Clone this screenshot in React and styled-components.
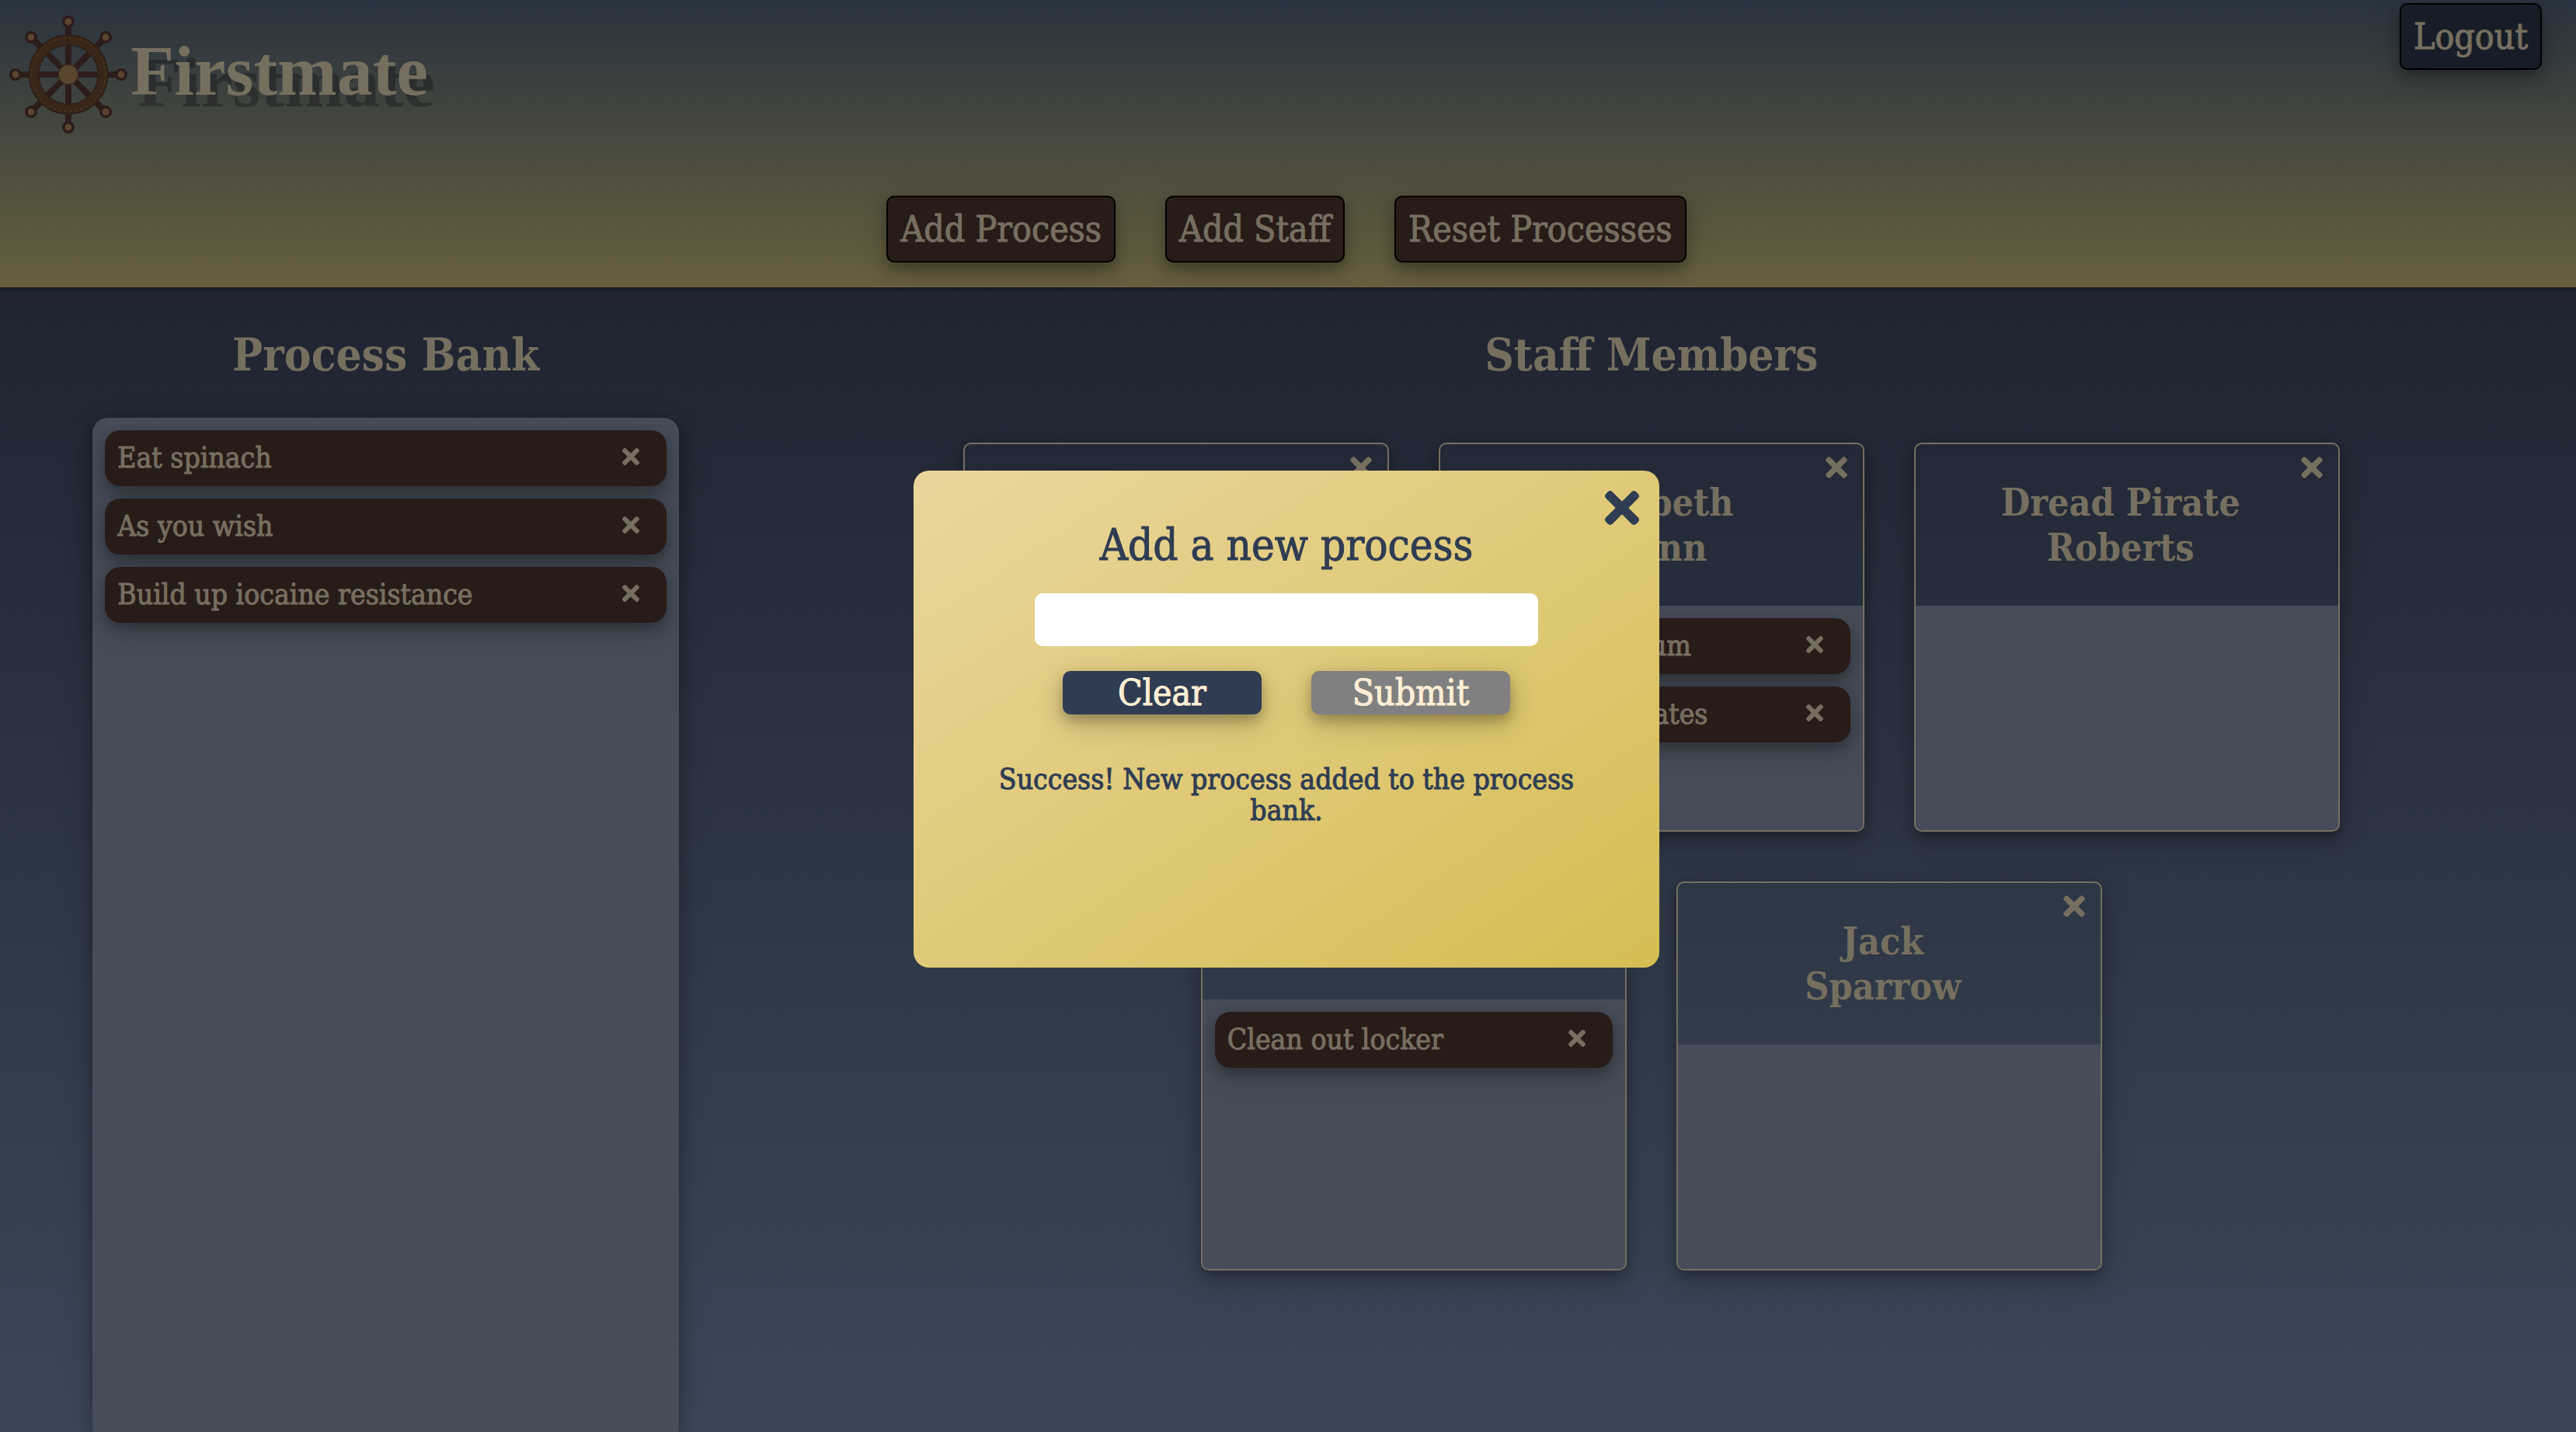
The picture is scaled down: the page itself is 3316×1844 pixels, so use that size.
import React, { useState } from "react";
import styled, { createGlobalStyle, ThemeProvider } from "styled-components";
import { FaTimes } from "react-icons/fa";

const theme = {
  serif: `"DejaVu Serif Condensed", "DejaVu Serif", serif`,
  title: `"Liberation Serif", serif`,
  parchment: "#766f60",
  cream: "#ffefd5",
  wood: "#281c19",
  slate: "#464d58",
  navy: "#2f3c52",
  night: "#171d27",
  lift: "0 8px 16px rgba(0, 0, 0, 0.24), 0 12px 40px rgba(0, 0, 0, 0.19)",
};

const GlobalStyle = createGlobalStyle`
  *, *::before, *::after { box-sizing: border-box; }
  body { margin: 0; background: #3c4857; }
  h1, h2, h3, p, ul { margin: 0; padding: 0; }
  button, input { font: inherit; color: inherit; }
  button { cursor: pointer; }
`;

const Page = styled.div`
  display: flex;
  flex-direction: column;
  height: 100vh;
  overflow: hidden;
  color: ${({ theme }) => theme.parchment};
  font-family: ${({ theme }) => theme.serif};
`;

const Header = styled.header`
  flex: none;
  background: linear-gradient(#29333f, #68603e);
  border-bottom: 4px solid ${({ theme }) => theme.night};
`;

const TopRow = styled.div`
  display: flex;
  justify-content: space-between;
  align-items: flex-start;
  padding: 4px 44px 0 8px;
`;

const Brand = styled.div`
  display: flex;
  align-items: center;
  padding-top: 12px;
`;

const Title = styled.h1`
  padding-bottom: 10px;
  font: 700 92px / 104px ${({ theme }) => theme.title};
  text-shadow: 9px 15px 0 rgba(0, 0, 0, 0.28);
`;

const HeaderButton = styled.button`
  padding: 16px;
  border: 2px solid #000;
  border-radius: 10px;
  background: ${({ $tone, theme }) => theme[$tone]};
  box-shadow: ${({ theme }) => theme.lift};
  font-size: 46px;
  line-height: 50px;
  -webkit-text-stroke: 1px;
`;

const Toolbar = styled.nav`
  display: flex;
  justify-content: center;
  gap: 64px;
  padding: 76px 4px 32px 0;
`;

const Main = styled.main`
  flex: 1;
  display: flex;
  min-height: 0;
  padding-right: 4px;
  background: linear-gradient(#1f2430, #3b4757);
`;

const Column = styled.section`
  display: flex;
  flex-direction: column;
  align-items: center;
  width: ${({ $width }) => $width};
  padding: 51px ${({ $inset }) => $inset || "0px"} 0 0;
`;

const Heading = styled.h2`
  font-size: 58px;
  line-height: 64px;
`;

const Bank = styled.div`
  flex: 1;
  width: 76%;
  margin-top: 49px;
  padding: 16px;
  border-radius: 20px 20px 0 0;
  background: ${({ theme }) => theme.slate};
  box-shadow: ${({ theme }) => theme.lift};
`;

const List = styled.ul`
  display: grid;
  gap: 16px;
  list-style: none;
`;

const Item = styled.li`
  display: flex;
  justify-content: space-between;
  align-items: center;
  height: 72px;
  padding: 0 30px 0 16px;
  border-radius: 20px;
  background: ${({ theme }) => theme.wood};
  box-shadow: ${({ theme }) => theme.lift};
  font-size: 37px;
  line-height: 40px;
  -webkit-text-stroke: 1px;
`;

const IconButton = styled.button`
  display: grid;
  place-items: center;
  width: 32px;
  height: 40px;
  padding: 0 0 4px;
  border: 0;
  background: none;
  font-size: 32px;
`;

const CornerButton = styled(IconButton)`
  position: absolute;
  top: ${({ $top }) => $top}px;
  right: ${({ $right }) => $right}px;
  width: ${({ $size }) => $size}px;
  height: ${({ $size }) => $size}px;
  padding: 0;
  font-size: ${({ $size }) => $size}px;
`;

const Staff = styled.div`
  display: flex;
  flex-wrap: wrap;
  justify-content: center;
  gap: 64px;
  margin-top: 81px;
`;

const Card = styled.article`
  position: relative;
  display: flex;
  flex-direction: column;
  width: 548px;
  min-height: 501px;
  border: 2px solid ${({ theme }) => theme.parchment};
  border-radius: 10px;
  overflow: hidden;
  box-shadow: ${({ theme }) => theme.lift};
`;

const CardName = styled.h3`
  min-height: 150px;
  padding: 46px 122px 46px 106px;
  font-size: 48px;
  line-height: 58px;
  text-align: center;
`;

const CardBody = styled.div`
  flex: 1;
  padding: 16px;
  background: ${({ theme }) => theme.slate};
`;

const Overlay = styled.div`
  position: fixed;
  inset: 0;
  display: flex;
  justify-content: center;
  align-items: center;
  padding: 8px 4px 0 0;
`;

const Dialog = styled.form`
  position: relative;
  display: flex;
  flex-direction: column;
  align-items: center;
  width: 960px;
  height: 640px;
  padding: 64px 96px;
  border-radius: 20px;
  background: linear-gradient(to bottom right, #ead69d, #d5bd53);
  color: ${({ theme }) => theme.navy};
  font-family: ${({ theme }) => theme.serif};
  -webkit-text-stroke: 1px;
`;

const DialogTitle = styled.label`
  font-size: 56px;
  line-height: 64px;
`;

const Field = styled.input`
  width: 648px;
  height: 68px;
  margin-top: 30px;
  padding: 0 16px;
  border: 0;
  border-radius: 10px;
  background: #fff;
  font-size: 37px;
`;

const Actions = styled.div`
  display: flex;
  gap: 64px;
  margin-top: 32px;
`;

const Action = styled.button`
  width: 256px;
  height: 56px;
  padding: 0;
  border: 0;
  border-radius: 10px;
  background: ${({ $muted, theme }) => ($muted ? "#808080" : theme.navy)};
  box-shadow: ${({ theme }) => theme.lift};
  color: ${({ theme }) => theme.cream};
  font-size: 46px;
  line-height: 54px;
`;

const Message = styled.p`
  margin-top: 64px;
  font-size: 37px;
  line-height: 40px;
  text-align: center;
`;

const Wheel = () => (
  <svg width="160" height="160" viewBox="-80 -80 160 160" aria-hidden="true">
    {[0, 45, 90, 135, 180, 225, 270, 315].map((a) => (
      <g key={a} transform={`rotate(${a})`}>
        <path d="M0 0V-62" stroke="#2c1d1b" strokeWidth="8" />
        <circle cy="-68" r="8" fill="#2c1d1b" />
        <circle cy="-68" r="4.4" fill="#5a4530" />
      </g>
    ))}
    <circle r="44.5" fill="none" stroke="#2c1f18" strokeWidth="14" />
    <circle r="44.5" fill="none" stroke="#382618" strokeWidth="11" />
    <circle r="47.5" fill="none" stroke="#54402a" strokeWidth="1" strokeDasharray="3 4" />
    <circle r="13.5" fill="#3a271f" />
    <circle r="12" fill="#5a4530" />
  </svg>
);

const Processes = ({ items }) => (
  <List>
    {items.map((name) => (
      <Item key={name}>
        {name}
        <IconButton type="button" aria-label={`Remove ${name}`}>
          <FaTimes />
        </IconButton>
      </Item>
    ))}
  </List>
);

const bank = ["Eat spinach", "As you wish", "Build up iocaine resistance"];

const staff = [
  { name: "", items: [] },
  { name: "Elizabeth Swann", items: ["Drink all the rum", "Hunt some pirates"] },
  { name: "Dread Pirate Roberts", items: [] },
  { name: "Davy Jones", items: ["Clean out locker"] },
  { name: "Jack Sparrow", items: [] },
];

export default function App() {
  const [value, setValue] = useState("");
  return (
    <ThemeProvider theme={theme}>
      <GlobalStyle />
      <Page>
        <Header>
          <TopRow>
            <Brand>
              <Wheel />
              <Title>Firstmate</Title>
            </Brand>
            <HeaderButton $tone="night">Logout</HeaderButton>
          </TopRow>
          <Toolbar>
            <HeaderButton $tone="wood">Add Process</HeaderButton>
            <HeaderButton $tone="wood">Add Staff</HeaderButton>
            <HeaderButton $tone="wood">Reset Processes</HeaderButton>
          </Toolbar>
        </Header>
        <Main>
          <Column $width="30%">
            <Heading>Process Bank</Heading>
            <Bank>
              <Processes items={bank} />
            </Bank>
          </Column>
          <Column $width="70%" $inset="54px">
            <Heading>Staff Members</Heading>
            <Staff>
              {staff.map(({ name, items }) => (
                <Card key={name}>
                  <CornerButton type="button" $top={10} $right={14} $size={40} aria-label={`Remove ${name || "staff member"}`}>
                    <FaTimes />
                  </CornerButton>
                  <CardName>{name}</CardName>
                  <CardBody>
                    <Processes items={items} />
                  </CardBody>
                </Card>
              ))}
            </Staff>
          </Column>
        </Main>
      </Page>
      <Overlay>
        <Dialog onSubmit={(e) => e.preventDefault()}>
          <CornerButton type="button" $top={16} $right={16} $size={64} aria-label="Close">
            <FaTimes />
          </CornerButton>
          <DialogTitle htmlFor="process">Add a new process</DialogTitle>
          <Field id="process" value={value} onChange={(e) => setValue(e.target.value)} />
          <Actions>
            <Action type="button" onClick={() => setValue("")}>Clear</Action>
            <Action type="submit" $muted>Submit</Action>
          </Actions>
          <Message>Success! New process added to the process bank.</Message>
        </Dialog>
      </Overlay>
    </ThemeProvider>
  );
}
